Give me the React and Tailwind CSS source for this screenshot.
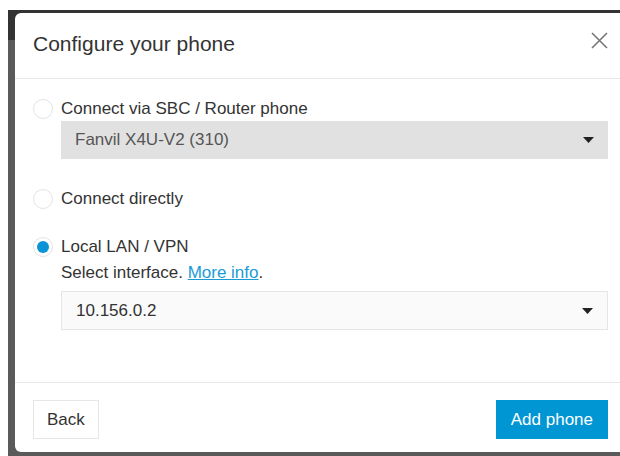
import React from "react";

const font = { fontFamily: '"Liberation Sans", Arial, sans-serif' };

function Radio({ checked }) {
  return (
    <span className="flex h-5 w-5 shrink-0 items-center justify-center rounded-full border border-[#e3e3e3] bg-white">
      {checked && <span className="h-3 w-3 rounded-full bg-[#0a94d6]" />}
    </span>
  );
}

function Caret() {
  return (
    <svg width="11" height="6" viewBox="0 0 11 6" className="shrink-0">
      <path d="M0 0h11L5.5 6z" fill="#222" />
    </svg>
  );
}

function Select({ value, disabled }) {
  return (
    <div
      className={
        "flex items-center justify-between pl-[14px] pr-[14px] text-[17px] " +
        (disabled
          ? "h-[38px] bg-[#e1e1e1] text-[#555]"
          : "h-[39px] border border-[#e6e6e6] bg-[#fafafa] pl-[13px] pr-[13px] text-[#333]")
      }
    >
      <span>{value}</span>
      <Caret />
    </div>
  );
}

export default function App() {
  return (
    <div className="h-[456px] w-[620px] overflow-hidden bg-white pl-2 pt-[10px]" style={font}>
      <div className="h-[446px] bg-[linear-gradient(to_bottom,#333_30px,#5a5a5a_30px)] pl-[7px] pt-[3px]">
        <div className="flex h-[439px] w-[640px] flex-col rounded-l-[6px] bg-white">
          {/* header */}
          <div className="flex h-[66px] shrink-0 items-center justify-between border-b border-[#e8e8e8] pl-[18px] pr-[47px]">
            <h2 className="mt-[-3px] text-[21px] text-[#333]">Configure your phone</h2>
            <svg width="17" height="17" viewBox="0 0 17 17" className="mt-[-11px]">
              <path d="M1 1L16 16M16 1L1 16" stroke="#777" strokeWidth="1.6" />
            </svg>
          </div>

          {/* body */}
          <div className="flex flex-1 flex-col border-b border-[#e8e8e8] pl-[18px] pr-[47px] pt-[20px] text-[17px] text-[#333]">
            <label className="flex h-5 items-center gap-2">
              <Radio />
              <span>Connect via SBC / Router phone</span>
            </label>
            <div className="ml-7 mt-[2px]">
              <Select value="Fanvil X4U-V2 (310)" disabled />
            </div>

            <label className="mt-[30px] flex h-5 items-center gap-2">
              <Radio />
              <span>Connect directly</span>
            </label>

            <label className="mt-[28px] flex h-5 items-center gap-2">
              <Radio checked />
              <span>Local LAN / VPN</span>
            </label>
            <div className="ml-7 mt-[6px] leading-[20px]">
              Select interface.{" "}
              <a className="text-[#1a9bd7] underline">More info</a>.
            </div>
            <div className="ml-7 mt-[8px]">
              <Select value="10.156.0.2" />
            </div>
          </div>

          {/* footer */}
          <div className="flex h-[69px] shrink-0 items-start justify-between pl-[18px] pr-[47px] pt-[17px] text-[17px]">
            <button className="h-[39px] border border-[#e6e6e6] bg-white px-[13px] text-[#333]">Back</button>
            <button className="h-[39px] bg-[#0096d4] px-[15px] text-white">Add phone</button>
          </div>
        </div>
      </div>
    </div>
  );
}
